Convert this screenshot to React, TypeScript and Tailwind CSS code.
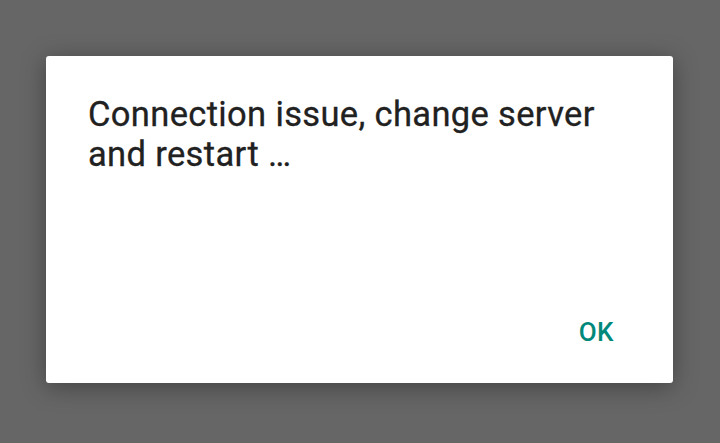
export default function App() {
  return (
    <div
      className="w-[720px] h-[443px] bg-[#666666] flex items-start pl-[46px] pt-[56px]"
      style={{ fontFamily: "Roboto, 'Noto Sans', sans-serif" }}
    >
      <div className="w-[627px] h-[327px] bg-white rounded-[3px] shadow-[0_4px_24px_rgba(0,0,0,0.35)] flex flex-col justify-between pl-[42px] pr-[59px] pt-[38px] pb-[36px]">
        <p className="text-[34.5px] leading-[40px] tracking-[0.35px] text-[#212121] [-webkit-text-stroke:0.3px_#212121]">
          Connection issue, change server
          <br />
          and restart …
        </p>
        <div className="flex justify-end">
          <button className="text-[26px] leading-[30px] font-medium text-[#00897b] tracking-[0.5px]">
            OK
          </button>
        </div>
      </div>
    </div>
  )
}
